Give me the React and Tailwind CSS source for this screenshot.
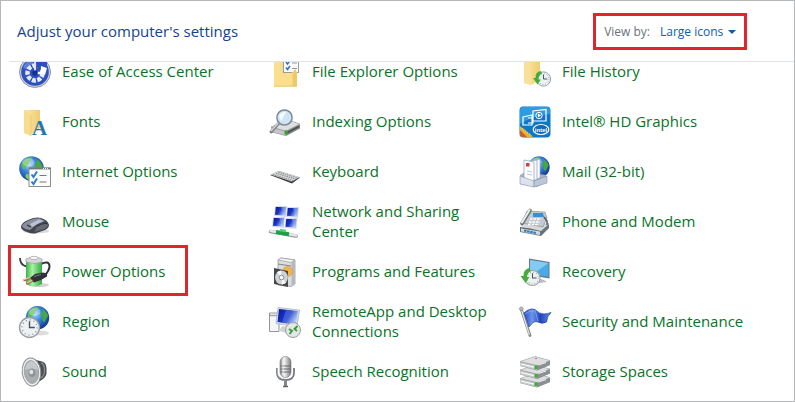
import { useState } from "react"

function Icon({ children }) {
  return (
    <svg viewBox="0 0 32 32" className="w-8 h-8 shrink-0 overflow-visible" aria-hidden="true">
      {children}
    </svg>
  )
}

// shared gradients, rendered once at the top of the page
function Gradients() {
  return (
    <svg className="absolute w-0 h-0" aria-hidden="true">
      <defs>
        <radialGradient id="ocean" cx="0.4" cy="0.35" r="0.65">
          <stop offset="0" stopColor="#9fd8f8" />
          <stop offset="0.45" stopColor="#3b86dc" />
          <stop offset="1" stopColor="#123a94" />
        </radialGradient>
        <linearGradient id="folder" x1="0" x2="1">
          <stop offset="0" stopColor="#fbe8a4" />
          <stop offset="1" stopColor="#f0cd72" />
        </linearGradient>
        <linearGradient id="screen" x1="0" x2="1" y2="0.5">
          <stop offset="0" stopColor="#0a14a0" />
          <stop offset="0.5" stopColor="#1c35c4" />
          <stop offset="1" stopColor="#b4cdf8" />
        </linearGradient>
        <linearGradient id="steel" x1="0" x2="1">
          <stop offset="0" stopColor="#8b8b8b" />
          <stop offset="0.4" stopColor="#f2f2f2" />
          <stop offset="1" stopColor="#77797b" />
        </linearGradient>
        <linearGradient id="battery" x1="0" x2="1">
          <stop offset="0" stopColor="#3fb04b" />
          <stop offset="0.4" stopColor="#a8f2a4" />
          <stop offset="1" stopColor="#35a845" />
        </linearGradient>
        <linearGradient id="flag" x1="0" x2="1">
          <stop offset="0" stopColor="#2a4bc0" />
          <stop offset="0.3" stopColor="#6d96ee" />
          <stop offset="0.6" stopColor="#2245bd" />
          <stop offset="1" stopColor="#5d8cea" />
        </linearGradient>
      </defs>
    </svg>
  )
}

function Globe({ cx, cy, r }) {
  return (
    <g transform={`translate(${cx} ${cy}) scale(${r / 12})`}>
      <circle r="12" fill="url(#ocean)" />
      <path d="M-8-7Q-5-11 0-11L1-9-2-7-3-4-6-2-7 1-9 0Q-11-4-8-7Z" fill="#62bd52" />
      <path d="M5-9Q9-7 11-2L9 1 7 5 5 2 5-1 3-3 5-6Z" fill="#47a843" />
      <path d="M-5 5L-1 6 0 8-2 11Q-6 10-6 7Z" fill="#7ccc60" />
      <ellipse cx="-3" cy="-6" rx="6" ry="4" fill="#fff" opacity="0.3" />
    </g>
  )
}

function Clock({ cx, cy, r }) {
  return (
    <g transform={`translate(${cx} ${cy}) scale(${r / 10})`}>
      <circle r="9.500" fill="#eef1f3" stroke="#9aa0a5" strokeWidth="1.300" />
      <circle r="7.200" fill="none" stroke="#858b91" strokeWidth="1.300" strokeDasharray="0.900 2.870" />
      <path d="M0-6V0H5" fill="none" stroke="#48525c" strokeWidth="1.300" />
    </g>
  )
}

function Drive({ y }) {
  return (
    <g transform={`translate(0 ${y})`}>
      <path d="M1 5L16 0 31 4V8.500L18 14 1 9.500Z" fill="#86898b" />
      <path d="M1 5L16 0 31 4 18 9Z" fill="#dedfe0" stroke="#a3a5a6" strokeWidth="0.500" />
      <path d="M1 5.500L18 9.500V13.500L1 9.500Z" fill="#c6c8ca" />
      <path d="M2 7.500L15 10.700" stroke="#f7f7f7" strokeWidth="1.200" />
      <path d="M18 9.500L31 4.500V8.500L18 13.500Z" fill="#8d9092" />
      <path d="M19.500 8.500L27 6" stroke="#f2f2f2" />
      <rect x="15.500" y="9" width="3" height="3.600" fill="#3fae36" />
    </g>
  )
}

function EaseIcon() {
  return (
    <Icon>
      <circle cx="16" cy="16" r="15.500" fill="#c9ccd6" stroke="#7d849c" strokeWidth="0.800" />
      <circle cx="16" cy="16" r="13.800" fill="#2c50c0" />
      <path d="M4 12A13 13 0 0 1 14 3V8Q9 9 7 13Z" fill="#5c7fdc" />
      <circle cx="16" cy="17" r="7.500" fill="none" stroke="#e6ebfa" strokeWidth="4.500" strokeDasharray="4 1.400" />
      <path d="M16 4H28V15L19 14Z" fill="#2c50c0" />
      <path d="M16 5V17" stroke="#dfe6fa" strokeWidth="2" />
      <path d="M16 16L23 15.500V18.500L16 18Z M22 10L28 12 26 19 21.500 17Z" fill="#fff" />
      <circle cx="16" cy="17" r="2.800" fill="#12309a" />
    </Icon>
  )
}

function FontsIcon() {
  return (
    <Icon>
      <path d="M5 4H21V22L12 29 5 27Z" fill="url(#folder)" />
      <path d="M5 4L12 9V30L5 27Z" fill="#f7dc8c" />
      <path d="M12 9V30" stroke="#e3c26c" strokeWidth="0.600" />
      <text x="13" y="29" fontSize="21" fontWeight="bold" fontFamily="Liberation Serif, serif" fill="#1f78b4">
        A
      </text>
    </Icon>
  )
}

function InternetIcon() {
  return (
    <Icon>
      <Globe cx={12.500} cy={12.500} r={12.300} />
      <rect x="10" y="12" width="21.500" height="18.500" fill="#fbfbfb" stroke="#8d8d8d" />
      <path d="M10 12.500H31.500" stroke="#777" strokeWidth="1.800" />
      <path d="M24 12.500H30" stroke="#eee" strokeDasharray="1 1" />
      <path d="M12.500 18.500L14.500 21 18 15.500M12.500 25.500L14.500 28 18 22.500" fill="none" stroke="#2480cf" strokeWidth="2" />
      <path d="M20.500 19.500H27.500M20.500 26H27.500" stroke="#777" strokeWidth="1.200" />
    </Icon>
  )
}

function MouseIcon() {
  return (
    <Icon>
      <ellipse cx="17" cy="25" rx="13" ry="2.500" fill="#bfc0c4" opacity="0.600" />
      <path d="M2 21Q2 17 9 14 17 10.500 22 12 29 14 30 19 30 22 26 24L16 27.500Q12 28 8 26 2 24 2 21Z" fill="#43464f" />
      <path d="M3 20Q4 17 10 14.500 17 11.500 21 12.500L26 15Q22 17 18 18L11 24Q4 23 3 20Z" fill="#8b90a0" />
      <path d="M11 18L20 13.500 24 15 13 21Z" fill="#bcc2d2" />
      <path d="M8 19L12 21M19 20L28 17.500" stroke="#2c2e35" strokeWidth="1.200" />
      <path d="M18 21Q24 17 29 18.500 29 21 25 23L15 26Z" fill="#666a76" />
    </Icon>
  )
}

function PowerIcon() {
  return (
    <Icon>
      <ellipse cx="20" cy="29" rx="10" ry="2" fill="#aaa" opacity="0.500" />
      <path d="M1 2Q1 8 6 10L9 10" fill="none" stroke="#3b3e42" strokeWidth="1.800" />
      <path d="M22 8Q30 4 30.500 10 30.500 15 25 20" fill="none" stroke="#303236" strokeWidth="2" />
      <path d="M7 4V28Q15 33 23 28V4Z" fill="url(#battery)" />
      <path d="M7 6V3Q15-1 23 3V6Q15 9 7 6Z" fill="#d5d7d8" stroke="#8c8f90" strokeWidth="0.600" />
      <ellipse cx="15" cy="2" rx="4" ry="1.700" fill="#f5f5f5" stroke="#999" strokeWidth="0.600" />
      <path d="M11 22L16 18 24 16.500Q29 17 28 20.500L22 24 15 26.500Z" fill="#303238" />
      <path d="M15 20.500L22 18.500" stroke="#777b83" />
      <path d="M12 22L4.500 24.500M14 24.500L7.500 28" stroke="#a36a45" strokeWidth="2.200" />
      <path d="M11 21.500L5 23.500M13 24.500L8 27" stroke="#f2d3b2" strokeWidth="1.100" />
    </Icon>
  )
}

function RegionIcon() {
  return (
    <Icon>
      <ellipse cx="21" cy="27" rx="9" ry="2.500" fill="#bbb" opacity="0.500" />
      <Globe cx={18.500} cy={11.800} r={11.700} />
      <Clock cx={10.500} cy={21.500} r={10.500} />
    </Icon>
  )
}

function SoundIcon() {
  return (
    <Icon>
      <path d="M13 3L21 5Q27.500 6 27.500 12V18Q26 23 20 25.500L13 29Z" fill="#4a4d50" />
      <path d="M22 7Q25.500 8 25.500 14T22 22" fill="none" stroke="#85898c" strokeWidth="1.500" />
      <ellipse cx="12.500" cy="16" rx="9.300" ry="14" fill="#f0f1f1" stroke="#888b8d" transform="rotate(-6 12.500 16)" />
      <ellipse cx="12.500" cy="16" rx="7.200" ry="11.500" fill="#a9aeb1" stroke="#8f9497" strokeWidth="0.700" transform="rotate(-6 12.500 16)" />
      <path d="M6 14Q7 6 12 5 18 6 19 14L13 12Z" fill="#c6cacc" />
      <ellipse cx="13" cy="17" rx="3.500" ry="4" fill="#8f9499" />
      <ellipse cx="12.300" cy="16" rx="2" ry="2.200" fill="#dde1e4" />
    </Icon>
  )
}

function ExplorerIcon() {
  return (
    <Icon>
      <path d="M5 2H22V30H5Z" fill="url(#folder)" />
      <rect x="14.500" y="1" width="15" height="15.500" fill="#fcfcfc" stroke="#8d9499" strokeWidth="0.900" />
      <path d="M17 6L18.500 8 21 4.500M17 11.500L18.500 13.500 21 10" fill="none" stroke="#2b6fc4" strokeWidth="1.500" />
      <path d="M23 7H28M23 12.500H28" stroke="#8c97a2" />
      <path d="M5 2L9 6V17H23L26 13 28 17V30.500H5Z" fill="#fadf8d" />
      <path d="M23.500 30V18L26 13 28 17V30Z" fill="#efc966" />
      <path d="M5 30.200H28" stroke="#e3bf62" strokeWidth="0.800" />
    </Icon>
  )
}

function IndexingIcon() {
  return (
    <Icon>
      <path d="M2 21L19 14 31 18V22.500L17 30 2 26Z" fill="#85888a" />
      <path d="M2 21L19 14 31 18 17 25Z" fill="#dedfe0" stroke="#999" strokeWidth="0.500" />
      <path d="M2 21.500L17 25.500V29.500L2 25.500Z" fill="#c4c6c8" />
      <path d="M18.500 26.500L30 20.500" stroke="#4e5052" strokeWidth="1.500" />
      <rect x="15.500" y="24.500" width="3" height="4" fill="#35a52e" />
      <path d="M10 17L2 26" stroke="#7d8184" strokeWidth="3" strokeLinecap="round" />
      <path d="M9.500 17L2 25" stroke="#d6d9db" strokeWidth="1.200" />
      <circle cx="15.500" cy="11.500" r="7.600" fill="#cfe4f5" stroke="#7f8a94" strokeWidth="1.500" />
      <path d="M10 10Q12 5.500 17 6L12 15Z" fill="#f5fbff" />
    </Icon>
  )
}

function KeyboardIcon() {
  return (
    <Icon>
      <path d="M1 19L10 15 31 21.500 23 27.500Z" fill="#3c3e40" />
      <path d="M1.500 18.500L10 15 30.500 21 23 25.500Z" fill="#d9dadb" />
      <path d="M4 18.500L24 24.500M7 17.300L26.500 23M9.500 16.200L28.500 21.800" stroke="#8a8d8f" strokeWidth="1.100" strokeDasharray="1.400 0.800" />
    </Icon>
  )
}

function MiniScreen({ x, y }) {
  return (
    <g transform={`translate(${x} ${y})`}>
      <path d="M1 0H13L12 11 0 10Z" fill="#d8dce6" />
      <path d="M1.800 1H12L11.200 9.500 1 8.800Z" fill="url(#screen)" />
      <path d="M7 1H12L11.200 9.500Z" fill="#86a4f0" opacity="0.550" />
    </g>
  )
}

function NetworkIcon() {
  return (
    <Icon>
      <MiniScreen x={5} y={0} />
      <MiniScreen x={17} y={1} />
      <MiniScreen x={3} y={11} />
      <MiniScreen x={15.500} y={12} />
      <path d="M1.500 25.500L27 30" stroke="#8b8f92" strokeWidth="3.600" strokeLinecap="round" />
      <path d="M1.500 25L27 29.500" stroke="#e6e8e9" strokeWidth="2.400" strokeLinecap="round" />
      <path d="M7 26L20 28.300" stroke="#1e9f4c" strokeWidth="4" />
      <path d="M11 24L17 25" stroke="#54cf7b" strokeWidth="2.500" />
    </Icon>
  )
}

function ProgramsIcon() {
  return (
    <Icon>
      <path d="M9 4L12 2 26 4V28L22 30.500 9 29Z" fill="#dcdddf" stroke="#8e9194" strokeWidth="0.700" />
      <path d="M9 4L22 6.500 26 4 12 2Z" fill="#f4f4f4" stroke="#8e9194" strokeWidth="0.600" />
      <path d="M22.500 6.500V30L26 28V4.500Z" fill="#b7babc" />
      <path d="M9 8L22 10" stroke="#84888b" />
      <circle cx="18.500" cy="15.500" r="5" fill="#f3b44f" stroke="#d9953a" strokeWidth="0.600" />
      <path d="M5 12L19 15V31L5 28Z" fill="#45494c" />
      <ellipse cx="12.500" cy="21.500" rx="6.400" ry="7" fill="#cfd3d6" />
      <path d="M12.500 21.500L8 16 12 14.500ZM12.500 21.500L17 27 13 28.500Z" fill="#f8fafb" />
      <circle cx="12.500" cy="21.500" r="2.300" fill="#f4f6f7" stroke="#7f868b" strokeWidth="0.900" />
    </Icon>
  )
}

function RemoteIcon() {
  return (
    <Icon>
      <path d="M0.500 7H10V25.500H0.500Z" fill="#f5f6f8" stroke="#92969c" />
      <path d="M1 9.500H9" stroke="#a3a8b0" strokeWidth="1.500" />
      <path d="M13 20L19 21 18 27 10 25Z" fill="#cfd2d6" />
      <path d="M9 1.500L30.500 4 28 21 7 17.500Z" fill="#dce1ea" stroke="#8992a3" strokeWidth="0.500" />
      <path d="M10 3L29 5 27 19 8.500 16Z" fill="url(#screen)" />
      <path d="M17 4L23 4.500 16 17 13 16.500Z" fill="#4868dd" opacity="0.700" />
      <circle cx="24" cy="24" r="7.500" fill="#e4e7e7" stroke="#999da0" />
      <path d="M20 23L23 25 20.500 28M28.500 20L25.500 23 28 25" fill="none" stroke="#379c36" strokeWidth="1.900" />
    </Icon>
  )
}

function SpeechIcon() {
  return (
    <Icon>
      <path d="M8 12V17Q8 24 16.500 24T25 17V12" fill="none" stroke="#777b7e" strokeWidth="1.800" />
      <path d="M8.500 12V17Q9 22.500 16.500 23" fill="none" stroke="#c5c8ca" strokeWidth="0.700" />
      <path d="M16.500 24V30" stroke="#85898b" strokeWidth="3" />
      <path d="M14 30.500H19" stroke="#5f6365" strokeWidth="1.500" />
      <rect x="11" y="0.500" width="11" height="21" rx="5.500" fill="url(#steel)" stroke="#777" strokeWidth="0.600" />
      <path d="M11.500 10H21.500M11.500 13H21.500M11.500 16H21.500" stroke="#66696c" strokeWidth="1.100" />
      <path d="M14 2.500V19" stroke="#fff" strokeWidth="1.200" opacity="0.700" />
    </Icon>
  )
}

function HistoryIcon() {
  return (
    <Icon>
      <path d="M5 2H21V24L12 29 5 27Z" fill="url(#folder)" />
      <path d="M5 2L12 6V29L5 27Z" fill="#f8e09a" />
      <Clock cx={24.500} cy={23} r={7.500} />
      <path d="M22 15Q16 16 16.500 22H14L18.500 28.500 22 23.500H19.500Q19.500 19 23 17.500Z" fill="#43ad3b" />
    </Icon>
  )
}

function IntelIcon() {
  return (
    <Icon>
      <rect x="0.500" y="0.500" width="31" height="31" rx="4" fill="#0b78c9" />
      <path d="M1 5Q1 1 5 1H27Q31 1 31 5V8Q15 9 1 18Z" fill="#2f9ce2" />
      <path d="M1 20L14 31H5Q1 31 1 27Z" fill="#e7b33a" />
      <path d="M1 24L8 31H5Q1 31 1 27Z" fill="#cf5a32" />
      <path d="M3 22L13 30" stroke="#f5dd72" strokeDasharray="2 1" />
      <path d="M4 11L13 9V19L4 19ZM14 5L27 3.500V15H14ZM9 12H14V17H9" fill="none" stroke="#fff" strokeWidth="1.200" />
      <circle cx="20" cy="9.500" r="3.200" fill="none" stroke="#fff" />
      <path d="M19 7.500L22 9.500 19 11.500Z" fill="#fff" />
      <ellipse cx="22" cy="23.500" rx="7.800" ry="5" fill="#1269b5" stroke="#fff" strokeWidth="1.200" />
      <text x="22" y="25.500" textAnchor="middle" fontSize="6" fontWeight="bold" fontFamily="Liberation Sans, sans-serif" fill="#fff">
        intel
      </text>
    </Icon>
  )
}

function MailIcon() {
  return (
    <Icon>
      <Globe cx={20} cy={11} r={10.700} />
      <path d="M1 19L6 16 27 19V26L18 31 1 28Z" fill="#a9b3c6" />
      <path d="M14 5L21 3V22L14 24Z" fill="#fff" stroke="#9aa6be" strokeWidth="0.700" />
      <path d="M10 5L18 4V24L10 24Z" fill="#f8faff" stroke="#8a98b8" strokeWidth="0.700" />
      <path d="M5 4L15 6V26L5 23Z" fill="#fff" stroke="#8a98b8" strokeWidth="0.700" />
      <rect x="7" y="7" width="3.500" height="3.500" fill="#d63c3c" />
      <path d="M8 15L13 16M8 18L13 19" stroke="#a4aec2" strokeWidth="0.700" />
      <path d="M1 20L15 25V31L1 28Z" fill="#dde3ed" stroke="#8892a8" strokeWidth="0.600" />
      <path d="M15 25L28 20V27L15 31Z" fill="#bbc6d9" stroke="#8892a8" strokeWidth="0.600" />
    </Icon>
  )
}

function PhoneIcon() {
  return (
    <Icon>
      <path d="M1 21L22 23 30 17V22L22 30 1 26Z" fill="#697279" />
      <path d="M1 20L8 16 30 18 22 25Z" fill="#d5dadd" />
      <path d="M2 22.500L21 25.500V29L2 25.500Z" fill="#d3dade" />
      <path d="M5 24.500L17 27" stroke="#277dbd" strokeWidth="2" strokeDasharray="2.500 0.700" />
      <path d="M3 17L8 5 26 6 28 12 24 21Z" fill="#c3c9cd" stroke="#7d868c" strokeWidth="0.600" />
      <path d="M14 7H24L25 11H14Z" fill="#3b8ddb" />
      <path d="M11 13H22M10 16H21M9 18.500H20" stroke="#fff" strokeWidth="1.600" strokeDasharray="2.500 1" />
      <path d="M3 17.500L11 4.500" stroke="#6a7278" strokeWidth="3.600" strokeLinecap="round" />
      <path d="M3 16.500L10.500 4" stroke="#eef0f1" strokeWidth="2" strokeLinecap="round" />
      <path d="M25 11L28 15V19" fill="none" stroke="#50585e" strokeWidth="1.500" />
    </Icon>
  )
}

function RecoveryIcon() {
  return (
    <Icon>
      <path d="M18 22L25 24 28 26 20 27Z" fill="#b9bfc4" />
      <path d="M10 2.500L30.500 6V22.500L10 19Z" fill="#647889" />
      <path d="M11 4L29.500 7V21L11 17.500Z" fill="#4ca9e8" />
      <path d="M11 4L29.500 7 14 18 11 17.500Z" fill="#83caf5" />
      <Clock cx={13.500} cy={22} r={8} />
      <path d="M10 12Q4 14 4.500 20H1.500L6.500 27 10.500 21H8Q8 17 12 15Z" fill="#43ad3b" />
    </Icon>
  )
}

function SecurityIcon() {
  return (
    <Icon>
      <path d="M2.500 4L11 29.500" stroke="#7e8386" strokeWidth="2.800" strokeLinecap="round" />
      <path d="M2.500 4L10.500 29" stroke="#e4e6e7" strokeWidth="1.200" />
      <circle cx="2.300" cy="2.800" r="1.900" fill="#b5babd" stroke="#777" strokeWidth="0.500" />
      <path d="M5 7Q11 1.500 16 3.500 20 8 25 8 28 8 32 6.500 28 10 27.500 16 23 18.500 19 16 15 14 10 21Z" fill="url(#flag)" stroke="#1d3b9b" strokeWidth="0.700" />
      <path d="M16 4L19 15M6 8Q11 4 15 5" fill="none" stroke="#92b4f5" opacity="0.700" />
    </Icon>
  )
}

function StorageIcon() {
  return (
    <Icon>
      <Drive y={17.500} />
      <Drive y={9} />
      <Drive y={0.500} />
      <circle cx="17" cy="2.500" r="0.700" fill="#666" />
    </Icon>
  )
}

const items = [
  { name: "Ease of Access Center", icon: EaseIcon },
  { name: "File Explorer Options", icon: ExplorerIcon },
  { name: "File History", icon: HistoryIcon },
  { name: "Fonts", icon: FontsIcon },
  { name: "Indexing Options", icon: IndexingIcon },
  { name: "Intel® HD Graphics", icon: IntelIcon },
  { name: "Internet Options", icon: InternetIcon },
  { name: "Keyboard", icon: KeyboardIcon },
  { name: "Mail (32-bit)", icon: MailIcon },
  { name: "Mouse", icon: MouseIcon },
  { name: "Network and Sharing Center", icon: NetworkIcon },
  { name: "Phone and Modem", icon: PhoneIcon },
  { name: "Power Options", icon: PowerIcon, marked: true },
  { name: "Programs and Features", icon: ProgramsIcon },
  { name: "Recovery", icon: RecoveryIcon },
  { name: "Region", icon: RegionIcon },
  { name: "RemoteApp and Desktop Connections", icon: RemoteIcon },
  { name: "Security and Maintenance", icon: SecurityIcon },
  { name: "Sound", icon: SoundIcon },
  { name: "Speech Recognition", icon: SpeechIcon },
  { name: "Storage Spaces", icon: StorageIcon },
]

export default function App() {
  const [view, setView] = useState("Large icons")

  return (
    <div className="min-h-screen border border-[#b5b7b9] bg-white font-['Open_Sans','Noto_Sans',sans-serif]">
      <Gradients />
      <header className="ml-2 h-[61px] pl-2 pr-[47px] flex items-center justify-between border-b border-[#dfe4e8]">
        <h1 className="text-[15px] leading-5 text-[#15438f]">Adjust your computer's settings</h1>
        <div className="h-[37px] px-2 pt-0.5 flex items-center gap-2.5 border-3 border-[#e0252c] text-xs">
          <label htmlFor="view-by" className="text-[#6b7278]">View by:</label>
          <div className="relative flex items-center">
            <select
              id="view-by"
              value={view}
              onChange={(e) => setView(e.target.value)}
              className="appearance-none bg-transparent pr-3 text-[#0f5cad] outline-none"
            >
              <option>Category</option>
              <option>Large icons</option>
              <option>Small icons</option>
            </select>
            <svg viewBox="0 0 8 4" className="absolute right-0 w-2 h-1 pointer-events-none" aria-hidden="true">
              <path d="M0 0H8L4 4Z" fill="#0f5cad" />
            </svg>
          </div>
        </div>
      </header>

      {/* the list is scrolled a little, so the first row is cut by the header */}
      <main className="overflow-hidden pb-1">
        <ul className="-mt-[15px] pl-[18px] grid grid-cols-[repeat(auto-fill,250px)] auto-rows-[50px]">
          {items.map(({ name, icon: ItemIcon, marked }) => (
            <li key={name} className="relative flex items-center">
              <a href="#" className="flex items-center gap-[11px] w-[232px] text-[15px] leading-5 text-[#0b7327]">
                <ItemIcon />
                <span className="pb-0.5">{name}</span>
              </a>
              {marked && (
                <span className="absolute -left-[11px] -top-0.5 w-[180px] h-[51px] border-3 border-[#e0252c] pointer-events-none"></span>
              )}
            </li>
          ))}
        </ul>
      </main>
    </div>
  )
}
